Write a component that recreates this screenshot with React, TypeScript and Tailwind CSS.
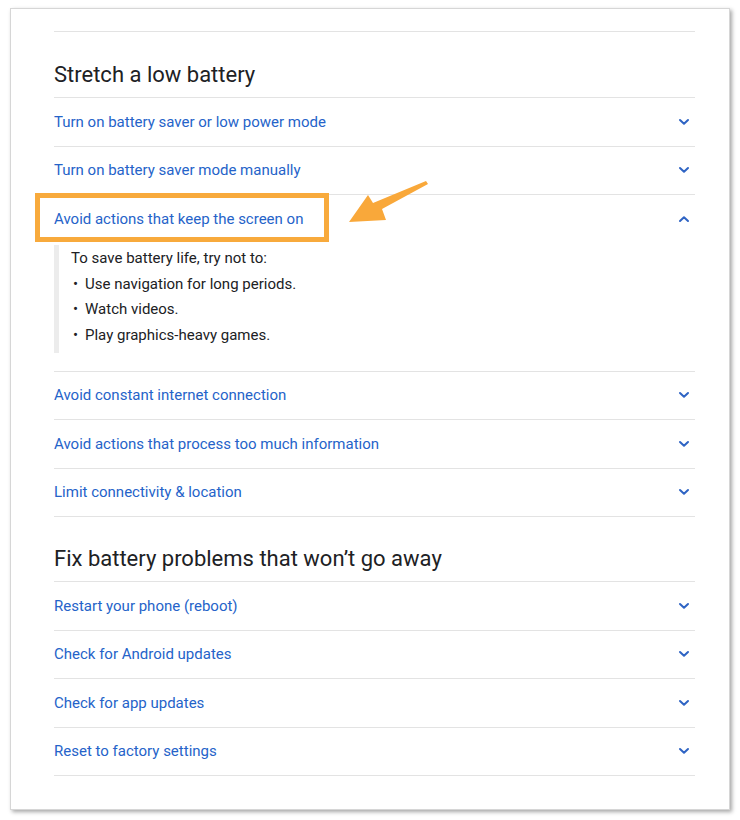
import React from 'react';

type Item = { title: string; open?: boolean; highlight?: boolean; body?: { intro: string; bullets: string[] } };

const stretch: Item[] = [
  { title: 'Turn on battery saver or low power mode' },
  { title: 'Turn on battery saver mode manually' },
  {
    title: 'Avoid actions that keep the screen on',
    open: true,
    highlight: true,
    body: {
      intro: 'To save battery life, try not to:',
      bullets: ['Use navigation for long periods.', 'Watch videos.', 'Play graphics-heavy games.'],
    },
  },
  { title: 'Avoid constant internet connection' },
  { title: 'Avoid actions that process too much information' },
  { title: 'Limit connectivity & location' },
];

const fix: Item[] = [
  { title: 'Restart your phone (reboot)' },
  { title: 'Check for Android updates' },
  { title: 'Check for app updates' },
  { title: 'Reset to factory settings' },
];

const Chevron = ({ up }: { up?: boolean }) => (
  <svg width="12" height="8" viewBox="0 0 12 8" className="shrink-0">
    <path
      d={up ? 'M2 6 L6 2.2 L10 6' : 'M2 2 L6 5.8 L10 2'}
      fill="none"
      stroke="#2f64c4"
      strokeWidth="2"
      strokeLinecap="round"
      strokeLinejoin="round"
    />
  </svg>
);

// annotation arrow pointing at the highlighted row
const Arrow = () => (
  <svg width="84" height="46" viewBox="0 0 84 46" className="absolute left-[294px] top-[-15px]">
    <polygon points="78,1 80,4 34,29 38,40 1,42 20,15 25,23" fill="#f9a83a" />
  </svg>
);

const Row = ({ item }: { item: Item }) => (
  <div className="border-b border-[#e3e3e3]">
    <div className="relative flex h-[47.5px] items-center justify-between pr-[5px]">
      <span className="text-[15px] text-[#2563c9]">{item.title}</span>
      <Chevron up={item.open} />
      {item.highlight && (
        <>
          <div className="absolute left-[-19px] top-[-2px] h-[49px] w-[294px] border-[5px] border-[#f8aa3c]" />
          <Arrow />
        </>
      )}
    </div>
    {item.body && (
      <div className="mt-[2px] mb-[18px] border-l-[5px] border-[#ececec] pl-[12px] pt-[3px] pb-[8px] text-[15px] text-[#202124]">
        <p className="leading-[20px]">{item.body.intro}</p>
        <ul className="mt-[6px] space-y-[5.5px]">
          {item.body.bullets.map((b) => (
            <li key={b} className="flex leading-[20px]">
              <span className="w-[14px] pl-[2px]">•</span>
              {b}
            </li>
          ))}
        </ul>
      </div>
    )}
  </div>
);

const Section = ({ title, items }: { title: string; items: Item[] }) => (
  <section>
    <h2 className="border-b border-[#e3e3e3] pb-[8px] text-[22px] leading-[28px] text-[#202124]">{title}</h2>
    {items.map((it) => (
      <Row key={it.title} item={it} />
    ))}
  </section>
);

export default function App() {
  return (
    <div className="min-h-[820px] bg-white pl-[10px] pt-[8px]" style={{ fontFamily: 'Roboto, "Noto Sans", sans-serif' }}>
      <div className="h-[802px] w-[720px] border border-[#d6d6d6] bg-white pl-[43px] pr-[34px] pt-[22px] shadow-[2px_2px_4px_rgba(0,0,0,0.35)]">
        <div className="border-t border-[#e3e3e3]" />
        <div className="mt-[29px]">
          <Section title="Stretch a low battery" items={stretch} />
        </div>
        <div className="mt-[28px]">
          <Section title="Fix battery problems that won’t go away" items={fix} />
        </div>
      </div>
    </div>
  );
}
